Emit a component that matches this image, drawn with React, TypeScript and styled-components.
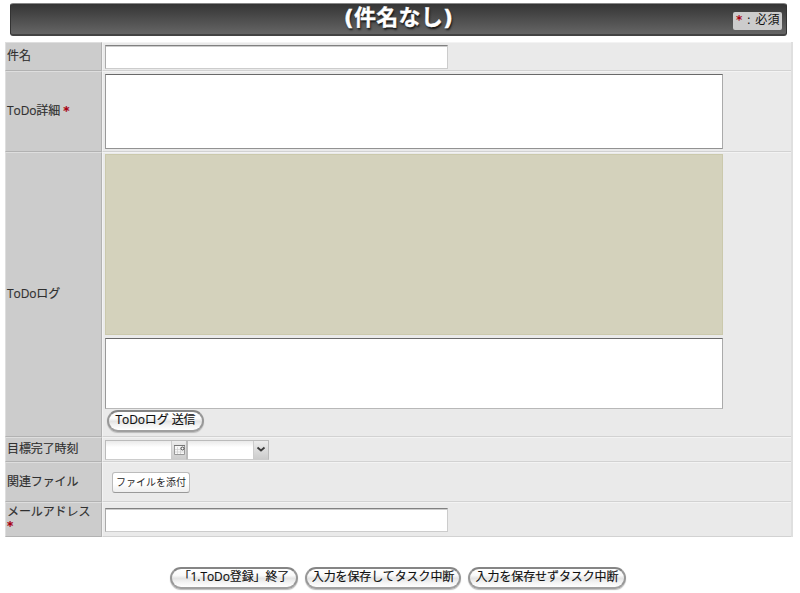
import React from "react";
import styled, { createGlobalStyle } from "styled-components";

const GlobalStyle = createGlobalStyle`
  * { box-sizing: border-box; }
  body {
    margin: 0;
    background: #fff;
    color: #303030;
    font-family: "Open Sans", "Noto Sans CJK JP", sans-serif;
    font-size: 12px;
  }
`;

const Page = styled.main`
  width: 800px;
  height: 593px;
  padding: 3px 7px 0 5px;
  overflow: hidden;
`;

const TitleBar = styled.header`
  display: grid;
  grid-template-columns: 1fr auto 1fr;
  align-items: center;
  height: 33px;
  margin: 0 6px 6px 5px;
  padding-right: 4px;
  border: 1px solid #333;
  border-top-color: #888;
  border-bottom: 2px solid #424242;
  border-radius: 3px;
  background: linear-gradient(#353535, #656565);
`;

const Title = styled.h1`
  grid-column: 2;
  margin: 0;
  padding: 0 0 3px 4px;
  color: #fff;
  font-family: "DejaVu Sans", "Noto Sans CJK JP", sans-serif;
  font-size: 22px;
  line-height: 28px;
  font-weight: 700;
  letter-spacing: 0.2px;
  -webkit-text-stroke: 0.3px currentColor;
  text-shadow: 1px 2px 2px #151515;
`;

const Legend = styled.div`
  justify-self: end;
  width: 49px;
  height: 18px;
  margin-top: 3px;
  padding-left: 3px;
  border-radius: 2px;
  background: #ccc;
  color: #111;
  font-family: "DejaVu Sans", "Noto Sans CJK JP", sans-serif;
  line-height: 16px;
  letter-spacing: 0.3px;
  white-space: pre;
`;

const Required = styled.span`
  color: #a90011;
  font-family: "DejaVu Sans", sans-serif;
  font-size: 12px;
  font-weight: 700;
  line-height: 1;
`;

const FormTable = styled.section`
  width: 788px;
  border-right: 2px solid #dfdfdf;
`;

const Row = styled.div<{ $height: number }>`
  display: grid;
  grid-template-columns: 97px 1fr;
  height: ${({ $height }) => $height}px;
`;

const Label = styled.div`
  display: flex;
  align-items: center;
  padding: 0 0 1px 1px;
  border-top: 1px solid #dedede;
  border-left: 1px solid #dedede;
  border-right: 1px solid #b2b2b2;
  border-bottom: 1px solid #b2b2b2;
  background: #ccc;
  line-height: 14px;
  letter-spacing: -0.1px;
  -webkit-text-stroke: 0.15px currentColor;
`;

const LabelText = styled.span`
  white-space: pre-wrap;
`;

const Field = styled.div<{ $top?: number }>`
  padding: ${({ $top = 2 }) => $top}px 0 0 2px;
  border-top: 1px solid #f3f3f3;
  border-left: 1px solid #f3f3f3;
  border-bottom: 1px solid #d2d2d2;
  background: #eaeaea;
`;

const TextInput = styled.input`
  display: block;
  width: 343px;
  height: 24px;
  border: 1px solid #ccc;
  border-top: 1px solid #808080;
  border-left-color: #aaa;
  border-radius: 0;
  outline: none;
  background: #fff;
  box-shadow: inset 0 1px #ccc;
`;

const TextArea = styled.textarea<{ $height: number; $soft?: boolean }>`
  display: block;
  width: 618px;
  height: ${({ $height }) => $height}px;
  border: 1px solid #999;
  border-top-color: #696969;
  border-right-color: #aaa;
  border-bottom-color: ${({ $soft }) => ($soft ? "#b8b8b8" : "#929292")};
  border-radius: 0;
  outline: none;
  resize: none;
  background: #fff;
`;

const LogPanel = styled.div`
  width: 618px;
  height: 181px;
  margin-bottom: 3px;
  border: 1px solid #cbc9ac;
  background: #d4d2bc;
`;

const PillButton = styled.button<{ $width: number }>`
  display: block;
  width: ${({ $width }) => $width}px;
  height: 22px;
  padding: 0 0 2px;
  border: 2px solid #989898;
  border-top-color: #858585;
  border-bottom-color: #a0a0a0;
  border-radius: 11px;
  background: linear-gradient(#fff 0%, #fafafa 35%, #e4e4e4 52%, #f2f2f2 72%, #fff 100%);
  box-shadow: 0 1px 1px #bbb;
  color: #101010;
  font: inherit;
  line-height: 16px;
  letter-spacing: -0.1px;
  -webkit-text-stroke: 0.15px currentColor;
  white-space: nowrap;
`;

const SendButton = styled(PillButton)`
  margin: 1px 0 0 2px;
`;

const DateTime = styled.div`
  display: flex;
`;

const Combo = styled.div`
  display: flex;
  height: 20px;
  width: 82px;
  border: 1px solid #bbb;
  border-bottom-color: #ccc;
  background: linear-gradient(#eaeaea, #fff 35%);
`;

const ComboInput = styled.input`
  flex: 1;
  min-width: 0;
  padding: 0 3px;
  border: 0;
  outline: 0;
  background: transparent;
  font: inherit;
`;

const ComboTrigger = styled.button`
  display: grid;
  place-items: center;
  width: 15px;
  padding: 0;
  border: 0;
  border-left: 1px solid #ccc;
  background: linear-gradient(#ececec, #ccc);
`;

const AttachButton = styled.button`
  display: block;
  width: 78px;
  height: 21px;
  margin-left: 7px;
  padding: 0;
  border: 1px solid #bbb;
  border-bottom-color: #999;
  border-radius: 3px;
  background: linear-gradient(#fff 55%, #eee);
  color: #282828;
  font: inherit;
  font-size: 10px;
  line-height: 17px;
  white-space: nowrap;
`;

const Actions = styled.footer`
  display: flex;
  gap: 7px;
  margin: 30px 0 0 165px;
`;

const CalendarIcon = () => (
  <svg width="13" height="13" viewBox="0 0 13 13" aria-hidden="true">
    <path d="M1.5 1.5h10v9h-10z" fill="#f8f8f8" stroke="#999" />
    <path d="M1 1.5h11" stroke="#777" />
    <path d="M2 5.5h9M2 8h9M4.5 3v7M7.5 3v7" stroke="#ccc" strokeWidth=".7" />
    <circle cx="9.5" cy="4.5" r="1.5" fill="#fff" stroke="#444" />
  </svg>
);

const ChevronIcon = () => (
  <svg width="10" height="10" viewBox="0 0 10 10" aria-hidden="true">
    <path d="m1.5 2.5 3.5 3 3.5-3" fill="none" stroke="#3b3b3b" strokeWidth="1.8" />
  </svg>
);

export default function App() {
  return (
    <>
      <GlobalStyle />
      <Page>
        <TitleBar>
          <Title>(件名なし)</Title>
          <Legend><Required>*</Required> : 必須</Legend>
        </TitleBar>
        <FormTable>
          <Row $height={29}>
            <Label><LabelText>件名</LabelText></Label>
            <Field><TextInput aria-label="件名" /></Field>
          </Row>
          <Row $height={81}>
            <Label><LabelText>ToDo詳細 <Required>*</Required></LabelText></Label>
            <Field><TextArea $height={75} aria-label="ToDo詳細" /></Field>
          </Row>
          <Row $height={285}>
            <Label><LabelText>ToDoログ</LabelText></Label>
            <Field $top={1}>
              <LogPanel />
              <TextArea $height={71} $soft aria-label="ToDoログ" />
              <SendButton $width={97}>ToDoログ 送信</SendButton>
            </Field>
          </Row>
          <Row $height={25}>
            <Label><LabelText>目標完了時刻</LabelText></Label>
            <Field>
              <DateTime>
                <Combo>
                  <ComboInput aria-label="日付" />
                  <ComboTrigger aria-label="日付を選択"><CalendarIcon /></ComboTrigger>
                </Combo>
                <Combo>
                  <ComboInput aria-label="時刻" />
                  <ComboTrigger aria-label="時刻を選択"><ChevronIcon /></ComboTrigger>
                </Combo>
              </DateTime>
            </Field>
          </Row>
          <Row $height={40}>
            <Label><LabelText>関連ファイル</LabelText></Label>
            <Field $top={9}><AttachButton>ファイルを添付</AttachButton></Field>
          </Row>
          <Row $height={35}>
            <Label><LabelText>メールアドレス<br /><Required>*</Required></LabelText></Label>
            <Field $top={5}><TextInput aria-label="メールアドレス" /></Field>
          </Row>
        </FormTable>
        <Actions>
          <PillButton $width={128}>「1.ToDo登録」終了</PillButton>
          <PillButton $width={156}>入力を保存してタスク中断</PillButton>
          <PillButton $width={158}>入力を保存せずタスク中断</PillButton>
        </Actions>
      </Page>
    </>
  );
}
